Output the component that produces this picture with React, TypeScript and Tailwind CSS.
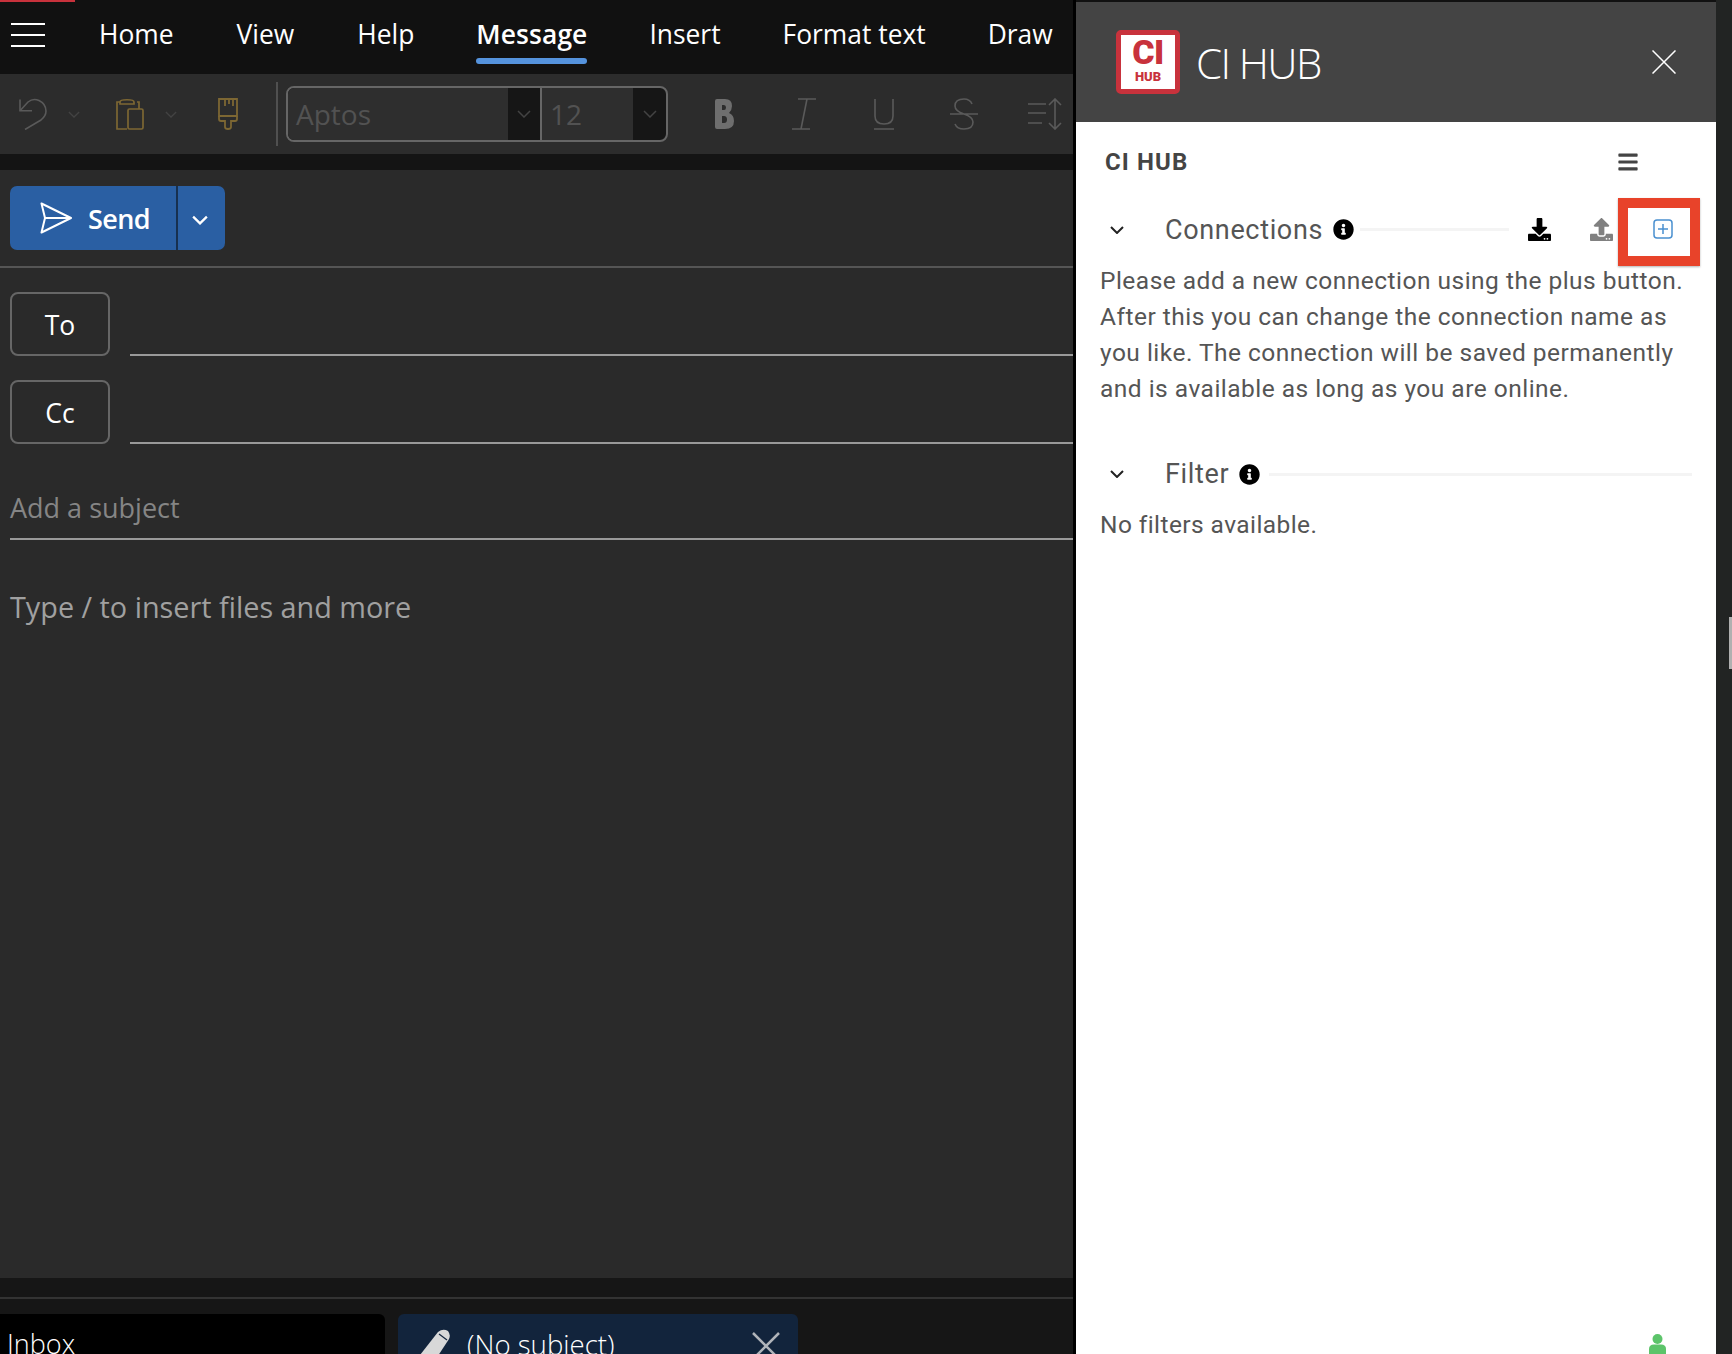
import React from "react";
import { FaDownload, FaUpload, FaInfoCircle, FaBars } from "react-icons/fa";

const tabFont = { fontFamily: '"Open Sans", sans-serif' };

function Chev({ className, w = 14, h = 8, color = "#434343", sw = 1.5 }: { className?: string; w?: number; h?: number; color?: string; sw?: number }) {
  return (
    <svg width={w} height={h} viewBox="0 0 14 8" className={className} fill="none" stroke={color} strokeWidth={sw}>
      <path d="M1 1l6 6 6-6" />
    </svg>
  );
}

function TopBar() {
  return (
    <div className="relative flex h-[74px] shrink-0 items-start bg-[#111111] pl-[11px] pt-[8px] text-[26.4px] text-white">
      <div className="absolute left-0 top-0 h-[2px] w-[75px] bg-[#c8323c]" />
      <div className="mt-[15px] flex h-[24px] w-[34px] flex-col justify-between">
        <div className="h-[2px] bg-white" />
        <div className="h-[2px] bg-white" />
        <div className="h-[2px] bg-white" />
      </div>
      <div className="ml-[54px] flex gap-[63px] leading-[52px]" style={tabFont}>
        <span>Home</span>
        <span>View</span>
        <span>Help</span>
        <span className="relative ml-[-1px] font-semibold tracking-[0.1px]">
          Message
          <span className="absolute left-0 right-0 top-[50px] h-[6px] rounded-full bg-[#5593dd]" />
        </span>
        <span className="ml-[-1px]">Insert</span>
        <span className="ml-[-1px]">Format text</span>
        <span className="ml-[-1px]">Draw</span>
      </div>
    </div>
  );
}

function Ribbon() {
  const gray = "#5a5a5a";
  const gold = "#7d6733";
  return (
    <div className="flex h-[80px] shrink-0 items-center bg-[#2c2c2c]">
      <svg width="28" height="32" viewBox="0 0 28 32" fill="none" stroke={gray} strokeWidth="1.6" className="ml-[19px]">
        <path d="M1 1.500V12.700H13" />
        <path d="M1 12.700L9 4Q14 0 20 2.500Q27 6 27 13Q27 18 22 22L6 31.500" />
      </svg>
      <Chev className="ml-[21px]" w={12} h={7} />
      <svg width="28" height="32" viewBox="0 0 28 32" fill="none" stroke={gold} strokeWidth="1.7" className="ml-[36px]">
        <path d="M4 4H1V31H11" />
        <path d="M4 4C4 1 18 1 18 4L18 6H4V4Z" />
        <path d="M21 4H23V11" />
        <rect x="12" y="11" width="15" height="20" rx="1.5" />
      </svg>
      <Chev className="ml-[21px]" w={12} h={7} />
      <svg width="20" height="32" viewBox="0 0 20 32" fill="none" stroke={gold} strokeWidth="1.8" className="ml-[41px]">
        <path d="M1 1H19V18H1Z" />
        <path d="M1 18V21Q1 23 3 23H7V29Q7 31 10 31Q13 31 13 29V23H17Q19 23 19 21V18" />
        <path d="M7 1V8M11 1V6M15 1V8" />
      </svg>
      <div className="ml-[38px] h-[64px] w-[2px] bg-[#505050]" />
      <div className="ml-[8px] flex h-[56px] w-[382px] overflow-hidden rounded-[8px] border-2 border-[#666666] bg-[#161616]">
        <div className="flex w-[220px] items-center bg-[#2e2e2e] pl-[8px] text-[28px] text-[#525252]" style={tabFont}>
          Aptos
        </div>
        <div className="flex w-[32px] items-center justify-center">
          <Chev w={14} h={8} />
        </div>
        <div className="w-[2px] bg-[#666666]" />
        <div className="flex w-[91px] items-center bg-[#2e2e2e] pl-[8px] text-[28px] text-[#525252]" style={tabFont}>
          12
        </div>
        <div className="flex flex-1 items-center justify-center">
          <Chev w={14} h={8} />
        </div>
      </div>
      <svg width="20" height="32" viewBox="0 0 20 32" fill="#6e6e6e" className="ml-[46px]">
        <path fillRule="evenodd" d="M1 3Q1 1 3 1H11Q18 1 18 8Q18 12 15 15Q20 17 20 23Q20 31 11 31H3Q1 31 1 29ZM8 7V12H10Q12 12 12 9.500Q12 7 10 7ZM8 18V25H10Q13 25 13 21.500Q13 18 10 18Z" />
      </svg>
      <svg width="26" height="32" viewBox="0 0 26 32" fill="none" stroke={gray} strokeWidth="1.6" className="ml-[57px]">
        <path d="M7 1H25M1 31H19M16 1L10 31" />
      </svg>
      <svg width="20" height="32" viewBox="0 0 20 32" fill="none" stroke={gray} strokeWidth="1.6" className="ml-[57px]">
        <path d="M1 1V18Q1 26 10 26Q19 26 19 18V1M0 31H20" />
      </svg>
      <svg width="28" height="32" viewBox="0 0 28 32" fill="none" stroke={gray} strokeWidth="1.6" className="ml-[56px]">
        <path d="M22 6Q20 1 14 1Q5 1 5 8Q5 13 14 16Q23 19 23 24Q23 31 14 31Q7 31 5 26M0 16H28" />
      </svg>
      <svg width="35" height="32" viewBox="0 0 35 32" fill="none" stroke={gray} strokeWidth="1.6" className="ml-[49px]">
        <path d="M1 6H19M1 15H19M1 25H15M28 1V31M22 7L28 1L34 7M22 25L28 31L34 25" />
      </svg>
    </div>
  );
}

function Compose() {
  const aptos = { fontFamily: '"Open Sans", sans-serif' };
  return (
    <div className="flex min-h-0 flex-1 flex-col bg-[#2a2a2a]" style={aptos}>
      <div className="h-[98px] shrink-0 border-b-2 border-[#555555] pl-[10px] pt-[16px]">
        <div className="flex h-[64px] w-[215px] overflow-hidden rounded-[7px] bg-[#2a5fa3] text-white">
          <div className="flex w-[166px] items-center pl-[30px]">
            <svg width="32" height="32" viewBox="0 0 32 32" fill="none" stroke="white" strokeWidth="2">
              <path d="M1.500 1.500L31 16L1.500 30.500L5 16ZM5 16H31" strokeLinejoin="round" />
            </svg>
            <span className="ml-[16px] pt-[2px] text-[27px] font-semibold tracking-[-0.6px]">Send</span>
          </div>
          <div className="w-[2px] bg-[#17304f]" />
          <div className="flex flex-1 items-center justify-center pr-[4px] pt-[3px]">
            <Chev w={16} h={10} color="white" sw={2} />
          </div>
        </div>
      </div>
      <div className="mt-[24px] flex items-end gap-[20px] pl-[10px]">
        <div className="flex h-[64px] w-[100px] items-center justify-center rounded-[8px] border-2 border-[#666666] pt-[4px] text-[26.5px] font-medium text-white">
          To
        </div>
        <div className="h-[2px] flex-1 bg-[#999999]" />
      </div>
      <div className="mt-[24px] flex items-end gap-[20px] pl-[10px]">
        <div className="flex h-[64px] w-[100px] items-center justify-center rounded-[8px] border-2 border-[#666666] pt-[4px] text-[26.5px] font-medium text-white">
          Cc
        </div>
        <div className="h-[2px] flex-1 bg-[#999999]" />
      </div>
      <div className="ml-[10px] flex h-[96px] items-center border-b-2 border-[#999999] pt-[34px] text-[27px] text-[#858585]">
        Add a subject
      </div>
      <div className="ml-[10px] mt-[48px] text-[28.8px] leading-[38px] text-[#a0a0a0]">Type / to insert files and more</div>
    </div>
  );
}

function Footer() {
  return (
    <div className="flex h-[76px] shrink-0 flex-col overflow-hidden bg-[#161616] text-[27.6px]" style={tabFont}>
      <div className="mt-[19px] h-[2px] shrink-0 bg-[#333333]" />
      <div className="mt-[15px] flex gap-[13px]">
        <div className="h-[60px] w-[385px] rounded-tr-[6px] bg-black pl-[7px] pt-[11px] text-[27px] font-light leading-[38px] text-white">Inbox</div>
        <div className="flex h-[60px] w-[400px] rounded-t-[6px] bg-[#12243c] pl-[20px] pt-[11px] font-light leading-[38px] text-white">
          <svg width="32" height="40" viewBox="0 0 32 40" className="mt-[4px] shrink-0">
            <path fill="#d8d8d8" d="M20 3Q25 -1 30 2Q33 6 31 10L14 36H0L2 26Z" />
            <path fill="none" stroke="#12243c" strokeWidth="1.200" d="M21 5L29 11" />
          </svg>
          <span className="ml-[17px]">(No subject)</span>
          <svg width="28" height="40" viewBox="0 0 28 40" fill="none" stroke="#b0b4ba" strokeWidth="2.500" className="ml-[137px] mt-[7px] shrink-0">
            <path d="M1 1L27 27M27 1L1 27" />
          </svg>
        </div>
      </div>
    </div>
  );
}

function SectionHead({ label }: { label: string }) {
  return (
    <div className="flex items-center">
      <Chev className="ml-[34px] shrink-0" w={14} h={8} color="#222222" sw={2} />
      <span className="ml-[41px] text-[27px] leading-[36px] tracking-[0.65px] text-[#555555]">{label}</span>
      <FaInfoCircle className="ml-[10px] shrink-0 text-[21px] text-black" />
    </div>
  );
}

function Panel() {
  return (
    <div className="flex w-[640px] shrink-0 flex-col" style={{ fontFamily: "Roboto, sans-serif" }}>
      <div className="h-[2px] shrink-0 bg-[#111111]" />
      <div className="flex h-[120px] shrink-0 items-center bg-[#444444] pl-[40px]">
        <div className="flex h-[64px] w-[64px] flex-col items-center rounded-[5px] border-[5px] border-[#c8323c] bg-white text-[#c8323c]">
          <span className="text-[34px] font-black leading-[35px] tracking-[-0.5px]">CI</span>
          <span className="text-[13px] font-black leading-[13px]">HUB</span>
        </div>
        <span className="ml-[16px] pt-[2px] text-[42px] font-light leading-none tracking-[-1.6px] text-white" style={tabFont}>
          CI HUB
        </span>
        <svg width="24" height="24" viewBox="0 0 24 24" fill="none" stroke="white" strokeWidth="1.500" className="ml-auto mr-[40px] shrink-0">
          <path d="M0.500 0.500L23.500 23.500M23.500 0.500L0.500 23.500" />
        </svg>
      </div>
      <div className="flex min-h-0 flex-1 flex-col bg-white">
        <div className="mt-[28px] flex h-[24px] items-center pl-[29px] pr-[77px]">
          <span className="text-[24px] font-bold tracking-[1.1px] text-[#444444]">CI HUB</span>
          <FaBars className="ml-auto text-[22px] text-[#444444]" />
        </div>
        <div className="mt-[24px] flex items-center">
          <div className="flex min-w-0 flex-1 items-center pb-[5px]">
            <SectionHead label="Connections" />
            <div className="ml-[6px] mr-[19px] h-[3px] flex-1 bg-[#f4f4f4]" />
            <FaDownload className="shrink-0 text-[23px] text-black" />
            <FaUpload className="ml-[39px] shrink-0 text-[23px] text-[#808080]" />
          </div>
          <div className="ml-[5px] mr-[16px] flex h-[68px] w-[82px] shrink-0 items-center justify-center border-[10px] border-[#e8432a] pb-[7px] pl-[8px] shadow-[0_1px_2px_rgba(0,0,0,0.3)]">
            <svg width="20" height="20" viewBox="0 0 20 20" fill="none" stroke="#4a90d0" strokeWidth="1.500">
              <rect x="1" y="1" width="18" height="18" rx="3" />
              <path d="M10 5V15M5 10H15" />
            </svg>
          </div>
        </div>
        <div className="ml-[24px] mt-[-3px] text-[24.5px] leading-[36px] tracking-[0.48px] text-[#555555]">
          <div>Please add a new connection using the plus button.</div>
          <div>After this you can change the connection name as</div>
          <div>you like. The connection will be saved permanently</div>
          <div>and is available as long as you are online.</div>
        </div>
        <div className="mt-[49px] flex items-center">
          <SectionHead label="Filter" />
          <div className="ml-[9px] mr-[24px] h-[3px] flex-1 bg-[#f4f4f4]" />
        </div>
        <div className="ml-[24px] mt-[15px] text-[24.5px] leading-[36px] tracking-[0.42px] text-[#555555]">No filters available.</div>
        <div className="mt-auto flex justify-end pr-[50px]">
          <svg width="17" height="20" viewBox="0 0 17 20" fill="#5cc46a" className="shrink-0">
            <circle cx="8.500" cy="5" r="5" />
            <path d="M0 20V15Q0 10.500 5 10.500H12Q17 10.500 17 15V20Z" />
          </svg>
        </div>
      </div>
    </div>
  );
}

export default function App() {
  return (
    <div className="flex h-[1354px] w-[1732px] overflow-hidden bg-[#222423]">
      <div className="flex w-[1073px] shrink-0 flex-col">
        <TopBar />
        <Ribbon />
        <div className="h-[16px] shrink-0 bg-[#141414]" />
        <Compose />
        <Footer />
      </div>
      <div className="w-[3px] shrink-0 bg-black" />
      <Panel />
      <div className="relative flex-1">
        <div className="absolute right-0 top-[617px] h-[52px] w-[3px] bg-[#b0b0b0]" />
      </div>
    </div>
  );
}
